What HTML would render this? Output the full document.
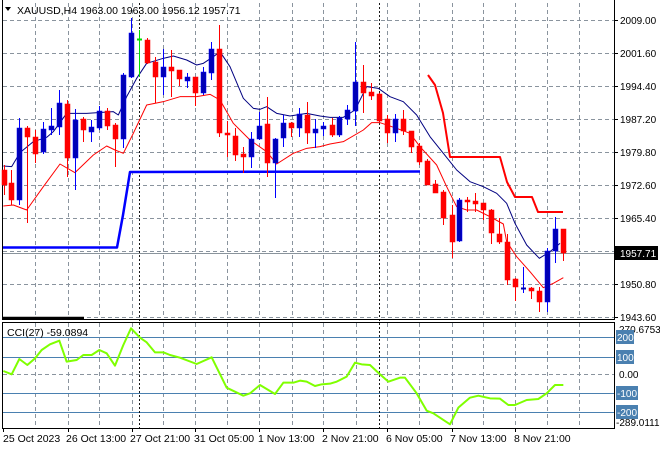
<!DOCTYPE html>
<html><head><meta charset="utf-8"><style>
html,body{margin:0;padding:0;background:#fff;width:660px;height:450px;overflow:hidden}
svg{display:block;font-family:"Liberation Sans",sans-serif;font-size:10.5px}
</style></head><body>
<svg id="s" width="660" height="450" xmlns="http://www.w3.org/2000/svg">
<rect width="660" height="450" fill="#fff"/>
<g id="grid"></g>
<g id="ma"></g>
<g id="c"></g>
<g id="lab"></g>
</svg>
<script>
const NS="http://www.w3.org/2000/svg";
function el(p,t,a,txt){const e=document.createElementNS(NS,t);for(const k in a)e.setAttribute(k,a[k]);if(txt!=null)e.textContent=txt;document.getElementById(p).appendChild(e);return e;}
const vx=[35,68,99,132,163,195,227,259,292,323,356,387,419,452,483,515,547,579];
const gc='#8a949e', gd='4,3';
for(const x of vx){el('grid','line',{x1:x+.5,y1:3,x2:x+.5,y2:317,stroke:gc,'stroke-dasharray':gd});el('grid','line',{x1:x+.5,y1:323,x2:x+.5,y2:428,stroke:gc,'stroke-dasharray':gd});}
for(const y of [20,53,86,119,152,185,218,251,284,317]){el('grid','line',{x1:3,y1:y+.5,x2:614,y2:y+.5,stroke:gc,'stroke-dasharray':gd});}
el('grid','line',{x1:3,y1:374.5,x2:614,y2:374.5,stroke:gc,'stroke-dasharray':gd});
for(const y of [337,357,393,412]){el('grid','line',{x1:3,y1:y+.5,x2:614,y2:y+.5,stroke:'#4a80b0','stroke-width':1});}
el('grid','line',{x1:3,y1:253.5,x2:614,y2:253.5,stroke:'#8a949c'});
for(const x of [139.5,379.5]){el('grid','line',{x1:x,y1:3,x2:x,y2:428,stroke:'#000','stroke-dasharray':'2,2','stroke-width':0.9});}
el('grid','path',{d:'M2.5 0V319.5H614.5V0',fill:'none',stroke:'#000'});
el('grid','path',{d:'M2.5 322.5H614.5V428.5H2.5Z',fill:'none',stroke:'#000'});
el('grid','line',{x1:3,y1:318,x2:84,y2:318,stroke:'#000','stroke-width':2.5});
for(const y of [20,53,86,119,152,185,218,284,317])el('grid','line',{x1:614,y1:y+.5,x2:618,y2:y+.5,stroke:'#000'});
for(const x of [3,68,132,195,259,323,387,452,515])el('grid','line',{x1:x+.5,y1:428,x2:x+.5,y2:432,stroke:'#000'});
function pl(pts,col,w,g){el(g||'ma','polyline',{points:pts.map(p=>p.join(',')).join(' '),fill:'none',stroke:col,'stroke-width':w,'stroke-linejoin':'round'});}
const z1=a=>a.map(([x,y])=>[x/3,y/3]), z2=a=>a.map(([x,y])=>[330+x/3,y/3]), z4=a=>a.map(([x,y])=>[330+x/3,225+y/3]), z3=a=>a.map(([x,y])=>[x/3,225+y/3]);
const blueMA=[...z1([[10,498],[35,500],[60,458],[100,425],[140,412],[160,395],[200,340],[260,340],[340,335],[355,345],[380,290],[410,235],[440,190],[490,175],[520,168],[560,180],[590,195],[610,190],[640,170],[660,155],[690,200],[730,295],[760,325],[780,328],[800,320],[830,340],[870,348],[920,340],[960,348],[990,352]]),...z2([[40,352],[75,330],[110,260],[145,265],[180,290],[220,305],[260,345],[300,410],[340,460],[380,510],[420,545],[460,560],[500,580],[530,610],[555,670]]),...z4([[590,60],[628,100],[660,80],[690,55]])];
const redMA=[...z1([[10,618],[40,615],[80,630],[130,560],[180,492],[225,518],[280,465],[320,438],[345,450],[370,460],[400,400],[440,315],[490,305],[540,290],[590,290],[630,283],[660,300],[700,370],[750,420],[800,455],[830,492],[880,460],[920,445],[960,440],[990,432]]),...z2([[40,425],[100,390],[125,368],[150,368],[200,385],[240,400],[270,440],[320,495],[350,560],[380,620],[410,630],[440,630],[480,650],[520,672]]),...z4([[530,50],[560,95],[600,140],[640,188],[670,175],[700,158]])];
pl(blueMA,'#000080',1);pl(redMA,'#ff0000',1);
pl([[3,247.5],[117,247.5],[123,215],[130,172],[420,171.5]],'#0000ff',2.5);
pl([[428,75],[435,85],[443,113],[450,157],[500,157],[507,182],[515,197],[532,197],[538,212],[563,212]],'#ff0000',2);
const cci=[...z3([[10,438],[35,448],[58,402],[82,420],[105,400],[125,375],[150,358],[178,347],[200,410],[230,405],[250,390],[275,390],[298,375],[320,385],[345,422],[370,360],[393,310],[420,338],[440,352],[465,382],[490,382],[510,390],[540,398],[590,417],[635,397],[680,488],[730,512],[750,505],[780,480],[825,507],[850,473],[880,473],[900,467],[920,470],[945,483],[965,478],[990,476]]),...z4([[20,470],[50,455],[75,413],[95,418],[120,420],[150,448],[175,470],[210,458],[225,458],[260,505],[290,557],[310,565],[360,598],[385,548],[420,518],[445,512],[480,520],[510,521],[535,540],[555,540],[590,525],[625,522],[650,505],[675,480],[700,480]])];
pl(cci,'#7fff00',2);
const C=[[4,170,185,165,195,'r'],[11,183,200,170,205,'r'],[19,128,200,118,205,'b'],[27,128,137,126,223,'r'],[35,137,154,130,163,'r'],[43,129,152,122,154,'b'],[51,126,130,108,135,'b'],[59,103,127,90,135,'b'],[67,104,158,100,177,'r'],[75,120,158,109,190,'b'],[83,119,130,117,142,'r'],[91,127,132,120,142,'b'],[99,111,128,106,130,'b'],[107,111,126,108,130,'r'],[115,125,139,123,167,'r'],[123,75,139,73,148,'b'],[131,33,77,18,78,'b'],[139,39,40,30,77,'g'],[147,40,63,38,64,'r'],[155,62,77,57,103,'r'],[163,67,77,49,95,'b'],[171,67,71,50,97,'r'],[179,70,79,70,86,'r'],[187,77,81,73,88,'b'],[195,77,93,77,106,'r'],[203,72,93,67,95,'b'],[211,49,73,42,80,'b'],[219,49,133,25,137,'r'],[227,133,135,121,157,'r'],[235,136,155,128,161,'r'],[243,154,157,147,173,'r'],[251,139,157,132,168,'b'],[259,126,139,112,140,'b'],[267,124,163,97,177,'r'],[275,139,163,138,198,'b'],[283,123,138,115,147,'b'],[291,123,128,122,137,'r'],[299,114,128,108,137,'b'],[307,115,133,102,144,'r'],[315,129,133,119,148,'b'],[323,126,129,122,136,'b'],[332,125,135,118,137,'r'],[339,118,135,116,137,'b'],[347,110,119,105,125,'b'],[355,82,111,42,126,'b'],[363,82,93,65,113,'r'],[371,92,96,83,100,'r'],[379,94,121,93,122,'r'],[387,119,133,115,143,'r'],[395,119,133,114,142,'b'],[403,119,131,110,135,'r'],[411,131,147,131,153,'r'],[419,146,162,143,165,'r'],[427,161,185,159,185,'r'],[435,184,193,180,193,'r'],[443,192,218,190,225,'r'],[452,215,242,205,258,'r'],[459,200,241,198,242,'b'],[467,200,202,197,212,'r'],[475,201,204,193,212,'r'],[483,203,210,203,220,'r'],[491,210,233,209,244,'r'],[499,234,242,218,244,'r'],[507,242,280,234,285,'r'],[515,279,287,278,301,'r'],[523,288,289,267,293,'b'],[531,288,291,287,299,'r'],[539,291,302,287,312,'r'],[547,251,302,248,312,'b'],[555,229,251,217,263,'b'],[563,229,253,229,261,'r']];
for(const [x,bt,bb,wt,wb,c] of C){const col=c=='r'?'#ff0000':c=='b'?'#0000b4':'#00dd00';
el('c','line',{x1:x+.5,y1:wt,x2:x+.5,y2:wb,stroke:c=='b'?'#0000ff':col});
if(bb-bt<2)el('c','line',{x1:x-2,y1:bt+.5,x2:x+3,y2:bt+.5,stroke:col,'stroke-width':2});
else el('c','rect',{x:x-2,y:bt,width:5,height:bb-bt,fill:col,stroke:c=='b'?'#0000ff':col,'stroke-width':.5});}
const T=(x,y,t,a)=>el('lab','text',Object.assign({x:x,y:y,fill:'#000'},a||{}),t);
el('lab','path',{d:'M5 7H11L8 11Z',fill:'#000'});
T(17,14,'XAUUSD,H4  1963.00 1963.00 1956.12 1957.71');
const R={'font-size':'10px'};
const pr=[[20,'2009.00'],[53,'2001.60'],[86,'1994.40'],[119,'1987.20'],[152,'1979.80'],[185,'1972.60'],[218,'1965.40'],[284,'1950.80'],[317,'1943.60']];
for(const [y,t] of pr)T(620,y+4,t,R);
el('lab','rect',{x:615,y:246,width:43,height:14,fill:'#000'});T(620,257,'1957.71',{fill:'#fff','font-size':'10px'});
T(7,336,'CCI(27) -59.0894');
T(619,333,'270.6753',R);
for(const [y,t,box] of [[337,'200',1],[357,'100',1],[374,'0.00',0],[393,'-100',1],[412,'-200',1]]){
 if(box){el('lab','rect',{x:616,y:y-7,width:t.length>3?22:18,height:14,fill:'#4a80b0'});T(617,y+4,t,{fill:'#fff','font-size':'10px'});}else T(619,y+4,t,R);}
T(616,426,'-289.0111',R);
for(const [x,t] of [[3,'25 Oct 2023'],[66,'26 Oct 13:00'],[130,'27 Oct 21:00'],[194,'31 Oct 05:00'],[258,'1 Nov 13:00'],[322,'2 Nov 21:00'],[386,'6 Nov 05:00'],[450,'7 Nov 13:00'],[514,'8 Nov 21:00']])T(x,442,t);
</script>
</body></html>
